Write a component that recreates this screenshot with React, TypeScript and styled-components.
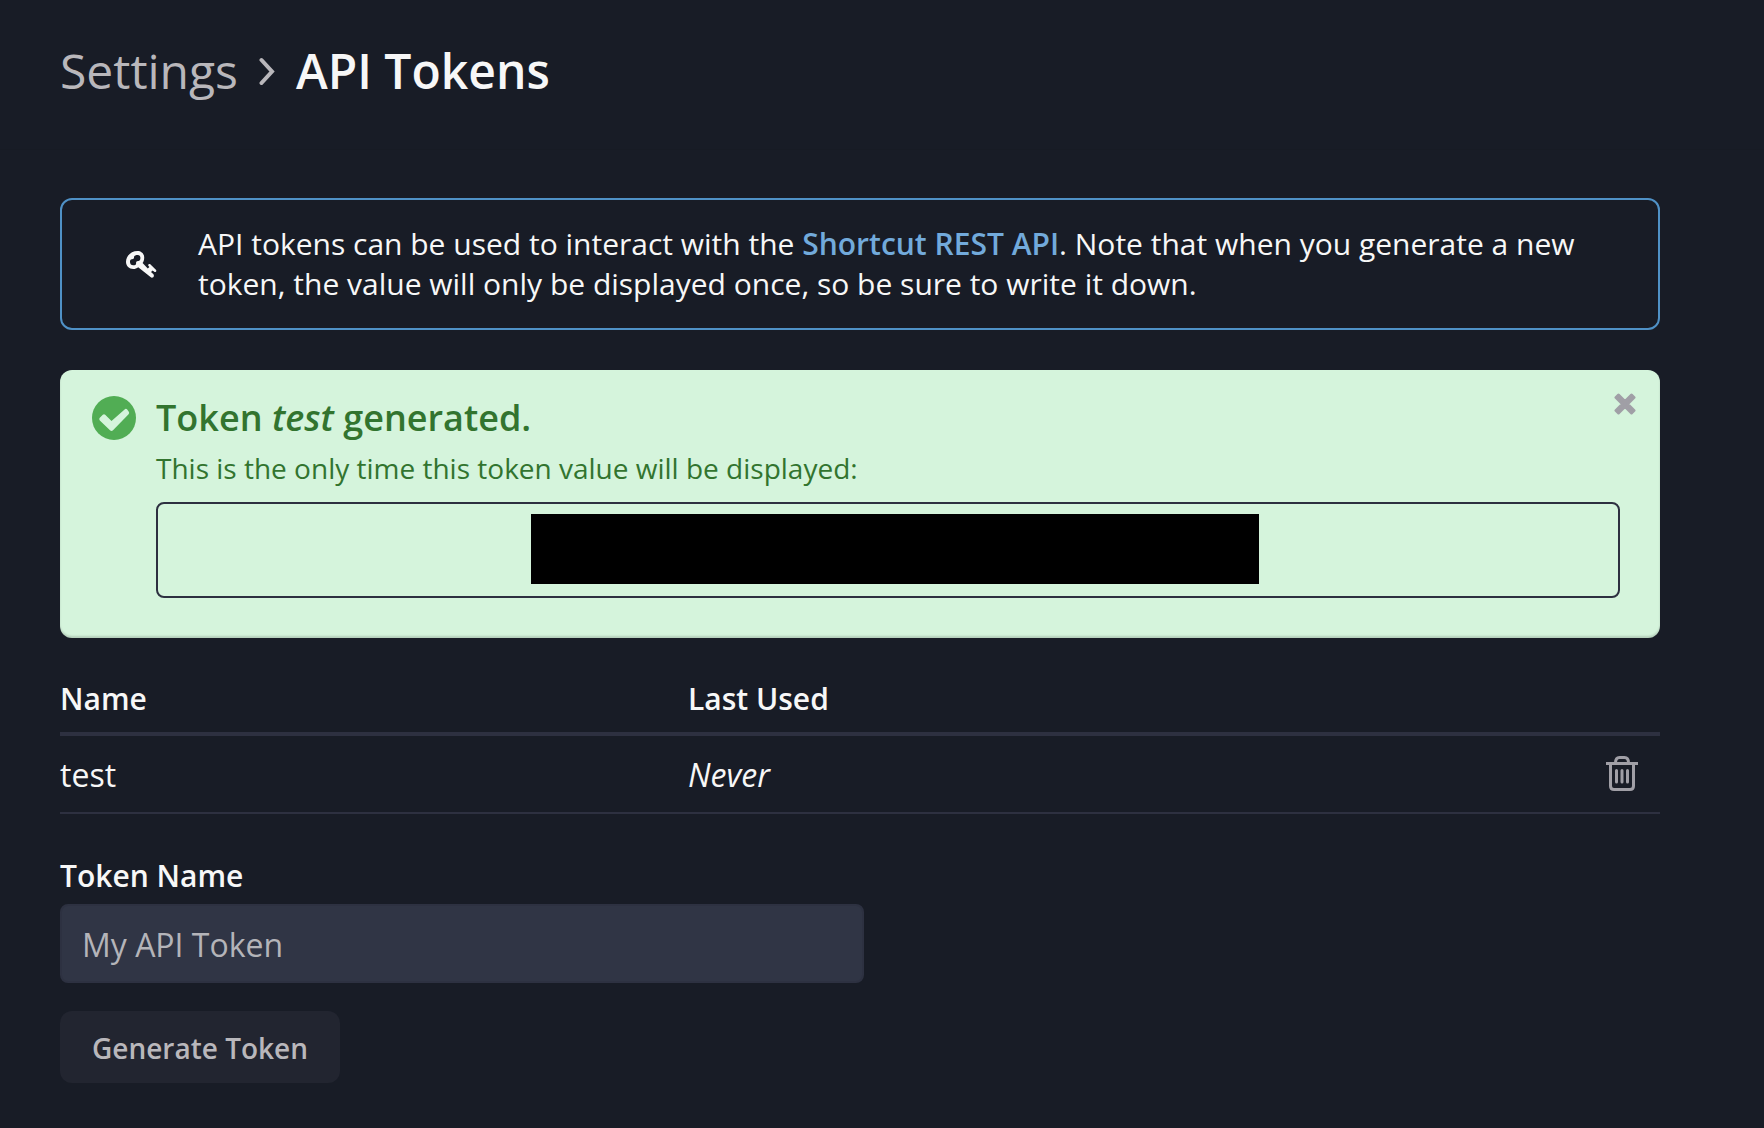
import React, { useState } from "react";
import styled, { createGlobalStyle } from "styled-components";

const color = {
  page: "#181c26",
  divider: "#171b24",
  text: "#f7f7f7",
  muted: "#b9b7bb",
  line: "#2d3040",
  info: "#4f91c6",
  link: "#72aadb",
  successBg: "#d5f4dc",
  successText: "#32742f",
  successIcon: "#51ad54",
};

const GlobalStyle = createGlobalStyle`
  *, *::before, *::after { box-sizing: border-box; }
  body {
    margin: 0;
    background: ${color.page};
    color: ${color.text};
    font-family: "Open Sans", "Noto Sans", sans-serif;
    font-size: 30px;
    line-height: 40px;
  }
`;

const Header = styled.header`
  padding: 41px 60px 48px;
  border-bottom: 1px solid ${color.divider};
`;

const Breadcrumb = styled.nav`
  display: flex;
  align-items: center;
  gap: 21px;
  font-size: 48px;
  line-height: 60px;
`;

const Crumb = styled.a`
  color: ${color.muted};
  text-decoration: none;
`;

const Title = styled.h1`
  margin: 0;
  font-size: 48px;
  line-height: 60px;
  font-weight: 600;
`;

const Main = styled.main`
  padding: 48px 104px 44px 60px;
`;

const InfoBox = styled.section`
  display: flex;
  align-items: center;
  padding: 24px 64px;
  gap: 40px;
  border: 2px solid ${color.info};
  border-radius: 12px;
`;

const InfoText = styled.p`
  margin: 0;
`;

const InfoLink = styled.a`
  color: ${color.link};
  font-weight: 600;
  text-decoration: none;
`;

const Icon = styled.svg`
  display: block;
  flex: none;
`;

const Success = styled.section`
  display: flex;
  align-items: flex-start;
  gap: 20px;
  margin-top: 40px;
  padding: 23px 24px 40px 32px;
  border-radius: 12px;
  background: ${color.successBg};
  box-shadow: inset 0 -2px 2px rgba(0, 0, 0, 0.15);
  color: ${color.successText};

  > svg {
    margin-top: 3px;
  }
`;

const SuccessBody = styled.div`
  flex: 1;
  min-width: 0;
  padding-right: 12px;
  padding-right: 16px;
`;

const SuccessTop = styled.div`
  display: flex;
  align-items: flex-start;
  justify-content: space-between;
  margin-right: -16px;
`;

const SuccessTitle = styled.h2`
  margin: 0;
  padding: 2px 0 7px;
  font-size: 36px;
  line-height: 46px;
  font-weight: 600;
`;

const SuccessNote = styled.p`
  margin: 0 0 14px;
  font-size: 28px;
`;

const IconButton = styled.button`
  display: inline-flex;
  padding: 0;
  border: 0;
  background: none;
  color: #a09fa6;
  cursor: pointer;
`;

const TokenBox = styled.div`
  display: flex;
  justify-content: center;
  padding: 10px 0 12px 14px;
  border: 2px solid ${color.line};
  border-radius: 8px;
`;

const Redacted = styled.div`
  width: 728px;
  height: 70px;
  background: #000;
`;

const Table = styled.table`
  width: 100%;
  margin-top: 41px;
  border-collapse: separate;
  border-spacing: 0;
  table-layout: fixed;
`;

const HeadCell = styled.th<{ $width?: string }>`
  width: ${(p) => p.$width ?? "auto"};
  padding: 0 0 13px;
  border-bottom: 4px solid ${color.line};
  font-weight: 600;
  text-align: left;
`;

const Cell = styled.td<{ $italic?: boolean }>`
  height: 78px;
  padding: 1px 0 0;
  border-bottom: 2px solid ${color.line};
  font-size: 32px;
  font-style: ${(p) => (p.$italic ? "italic" : "normal")};
`;

const ActionCell = styled(Cell)`
  padding: 0 22px 2px 0;

  > button {
    display: flex;
    margin-left: auto;
  }
`;

const Form = styled.form`
  display: flex;
  flex-direction: column;
  align-items: flex-start;
  margin-top: 42px;
`;

const Label = styled.label`
  margin-bottom: 8px;
  font-weight: 600;
`;

const Input = styled.input`
  width: 804px;
  max-width: 100%;
  height: 79px;
  margin-bottom: 28px;
  padding: 1px 20px 0;
  border: 2px solid #2d3141;
  border-radius: 8px;
  outline: 0;
  background: #303545;
  color: ${color.text};
  font: inherit;
  font-size: 32px;

  &::placeholder {
    color: #b4b4b9;
    opacity: 1;
  }
`;

const SubmitButton = styled.button`
  height: 72px;
  padding: 1px 32px 0;
  border: 0;
  border-radius: 12px;
  background: #222530;
  color: ${color.muted};
  font: inherit;
  font-size: 28px;
  font-weight: 600;
  cursor: pointer;
`;

const ChevronIcon = () => (
  <Icon width="16" height="28" viewBox="0 -1 16 28" fill="none" stroke={color.muted} strokeWidth="4" strokeLinecap="round" strokeLinejoin="miter" aria-hidden="true">
    <path d="M2.500 2 13 13.500 2.500 25" />
  </Icon>
);

const KeyIcon = () => (
  <Icon width="32" height="30" viewBox="1 -1 32 30" aria-hidden="true">
    <path
      fill="#f7f7f7"
      fillRule="evenodd"
      d="M12.500 1C16.500 1 19.500 4 19.200 8c-.1 2-.6 3.600-1.600 5l5.200 5.400 1.600-1.500-.9-.9c-1-1.200.7-2.700 1.800-1.700l5.600 5.400c1.200 1.200-.3 3-1.700 2l-1.500-1.300-1.700 1.500 2.200 2.200c2 2-.7 4.800-2.700 3L13.200 17.200c-1.500 1.200-3 1.800-5 1.800C4 19 .9 16 1 11.700 1.100 5.600 6.500 1 12.500 1Zm.3 4C11 5 9.200 5.500 9 7c.4 1.600-.8 2.400-2.200 2.300C5.200 9.400 5 10.800 5 12c0 2 1.400 3.400 3.400 3.300 1.400 0 2.500-.6 2.700-1.600-.3-1.800.6-2.800 2.300-2.600 1.400-.1 2-1.400 2-3C15.500 6.200 14.500 5 12.800 5Z"
    />
  </Icon>
);

const CheckIcon = () => (
  <Icon width="44" height="44" viewBox="0 0 44 44" aria-hidden="true">
    <circle cx="22" cy="22" r="22" fill={color.successIcon} />
    <path
      fill={color.successBg}
      d="M7.800 21.800 10.800 18.800Q12 17.800 13.200 18.800L19.500 25 32.600 13.400Q34 12.300 35.200 13.500L36.800 15.800Q37.700 17 36.600 18.200L21 34.300Q19.500 35.700 18 34.300L7.800 24.400Q6.600 23.100 7.800 21.800Z"
    />
  </Icon>
);

const CloseIcon = () => (
  <Icon width="22" height="22" viewBox="0 0 22 22" aria-hidden="true">
    <path
      stroke="currentColor"
      strokeLinejoin="round"
      strokeWidth="3"
      fill="currentColor"
      d="M4.500 2 11 8.500 17.500 2 20 4.500 13.500 11 20 17.500 17.500 20 11 13.500 4.500 20 2 17.500 8.500 11 2 4.500Z"
    />
  </Icon>
);

const TrashIcon = () => (
  <Icon width="32" height="36" viewBox="0 0 32 36" fill="none" stroke="currentColor" strokeWidth="3" aria-hidden="true">
    <path d="M0 8.500H32" />
    <path d="M9.500 8C9.500 4.500 11 2.500 13.500 2.500H18.500C21 2.500 22.500 4.500 22.500 8" />
    <path d="M4.500 8.500V31Q4.500 34.500 8 34.500H24Q27.500 34.500 27.500 31V8.500" />
    <path strokeLinecap="round" d="M10.500 15.500V27M16 15.500V27M21.500 15.500V27" />
  </Icon>
);

const tokens = [{ name: "test", lastUsed: "Never" }];

export default function App() {
  const [name, setName] = useState("");

  return (
    <>
      <GlobalStyle />
      <Header>
        <Breadcrumb aria-label="Breadcrumb">
          <Crumb href="#settings">Settings</Crumb>
          <ChevronIcon />
          <Title>API Tokens</Title>
        </Breadcrumb>
      </Header>
      <Main>
        <InfoBox>
          <KeyIcon />
          <InfoText>
            API tokens can be used to interact with the <InfoLink href="#api">Shortcut REST API</InfoLink>. Note that
            when you generate a new token, the value will only be displayed once, so be sure to write it down.
          </InfoText>
        </InfoBox>

        <Success>
          <CheckIcon />
          <SuccessBody>
            <SuccessTop>
              <SuccessTitle>
                Token <em>test</em> generated.
              </SuccessTitle>
              <IconButton type="button" aria-label="Dismiss">
                <CloseIcon />
              </IconButton>
            </SuccessTop>
            <SuccessNote>This is the only time this token value will be displayed:</SuccessNote>
            <TokenBox>
              <Redacted />
            </TokenBox>
          </SuccessBody>
        </Success>

        <Table>
          <thead>
            <tr>
              <HeadCell scope="col" $width="628px">Name</HeadCell>
              <HeadCell scope="col">Last Used</HeadCell>
              <HeadCell as="td" $width="80px" />
            </tr>
          </thead>
          <tbody>
            {tokens.map((token) => (
              <tr key={token.name}>
                <Cell>{token.name}</Cell>
                <Cell $italic>{token.lastUsed}</Cell>
                <ActionCell>
                  <IconButton type="button" aria-label={`Delete ${token.name}`}>
                    <TrashIcon />
                  </IconButton>
                </ActionCell>
              </tr>
            ))}
          </tbody>
        </Table>

        <Form onSubmit={(e) => e.preventDefault()}>
          <Label htmlFor="token-name">Token Name</Label>
          <Input
            id="token-name"
            type="text"
            placeholder="My API Token"
            value={name}
            onChange={(e) => setName(e.target.value)}
          />
          <SubmitButton type="submit">Generate Token</SubmitButton>
        </Form>
      </Main>
    </>
  );
}
